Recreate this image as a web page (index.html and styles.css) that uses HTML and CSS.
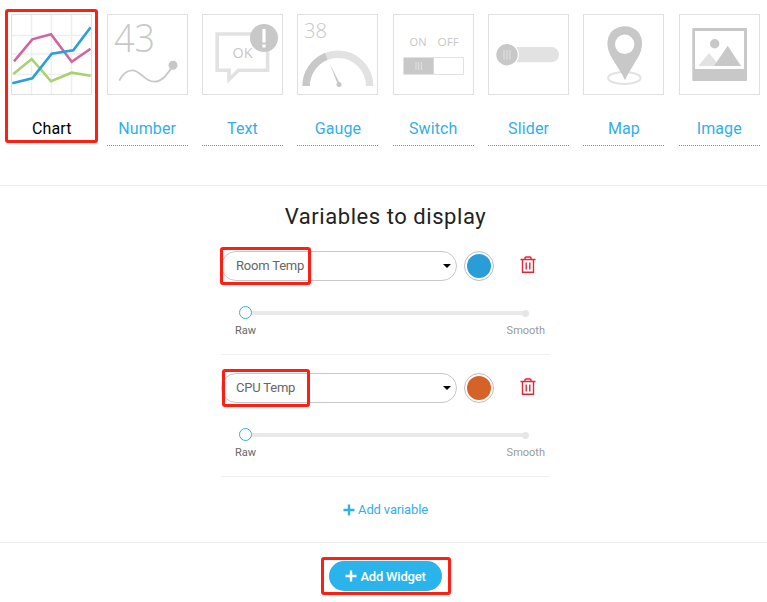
FILE: index.html
```html
<!DOCTYPE html>
<html lang="en">
<head>
<meta charset="utf-8">
<title>Add widget</title>
<link rel="stylesheet" href="styles.css">
</head>
<body>
<nav class="types">
  <a class="type selected"><svg class="tile" viewBox="0 0 79 79"><path class="grid" d="M19.5 0V79M39.5 0V79M59.5 0V79M0 20.5H79M0 39H79M0 59.5H79"/><g class="series"><path stroke="#d1669f" d="M2 46.3 20.3 24.3 39 19.3 59.7 46.7 78.5 33.7"/><path stroke="#a9d171" d="M1.3 59 19.7 44 39 66.3 59.7 57.7 78.7 60.7"/><path stroke="#2b9fdb" d="M.3 68.3 20.3 63.3 39.7 38.7 61.3 35.3 78.7 12.3"/></g></svg><span class="name">Chart</span><i class="mark mark-chart"></i></a>
  <a class="type"><svg class="tile" viewBox="0 0 79 79"><text class="light" x="6" y="37" font-size="39" textLength="41" lengthAdjust="spacingAndGlyphs">43</text><path fill="none" stroke="#c8c8c8" stroke-width="1.8" d="M11.3 65.7C15 58 20 55.3 24.3 55.3C33 55.3 36 66.7 46 66.7C54 66.7 59 60 64.7 51"/><circle class="dark" cx="65" cy="50.3" r="4.5"/></svg><span class="name">Number</span></a>
  <a class="type"><svg class="tile" viewBox="0 0 79 79"><path fill="none" stroke="#e2e2e2" stroke-width="3.6" d="M14.2 19H64.6V55.2H35.5L26 64.5V55.2H14.2Z"/><text class="plain" x="29.5" y="42.7" font-size="14" textLength="20" lengthAdjust="spacingAndGlyphs">OK</text><circle class="dark" cx="61" cy="23" r="14"/><path fill="#fff" d="M59.4 14h3.2v13.5h-3.2zM59.4 29.5h3.2v3h-3.2z"/></svg><span class="name">Text</span></a>
  <a class="type"><svg class="tile" viewBox="0 0 79 79"><text class="light" x="6" y="23.3" font-size="21" textLength="23" lengthAdjust="spacingAndGlyphs">38</text><path fill="none" stroke="#e2e2e2" stroke-width="7.4" d="M8.1 71A31.8 31.8 0 0 1 71.7 71"/><path fill="none" stroke="#c8c8c8" stroke-width="7.4" d="M8.1 71A31.8 31.8 0 0 1 28.3 41.4"/><path class="dark" d="M31.6 48.3 42 69 40 70Z"/><circle class="dark" cx="41" cy="69.4" r="2.5"/></svg><span class="name">Gauge</span></a>
  <a class="type"><svg class="tile" viewBox="0 0 79 79"><text class="plain" x="15.5" y="31" font-size="11.5" textLength="17" lengthAdjust="spacingAndGlyphs">ON</text><text class="plain" x="43.5" y="31" font-size="11.5" textLength="21.5" lengthAdjust="spacingAndGlyphs">OFF</text><path fill="#fff" stroke="#e2e2e2" d="M9.5 42.5H69.5V59.5H9.5Z"/><path class="dark" d="M10 43H39.7V59H10Z"/><path stroke="#e2e2e2" d="M22 47V55M24.7 47V55M27.4 47V55"/></svg><span class="name">Switch</span></a>
  <a class="type"><svg class="tile" viewBox="0 0 79 79"><rect x="16" y="32" width="54" height="15.3" rx="7.6" fill="#e2e2e2"/><circle class="dark" cx="18" cy="39.7" r="11.3" stroke="#fff" stroke-width="1.2"/><path stroke="#e2e2e2" d="M15 35V44.5M18 35V44.5M21 35V44.5"/></svg><span class="name">Slider</span></a>
  <a class="type"><svg class="tile" viewBox="0 0 79 79"><ellipse cx="40.3" cy="63" rx="16.2" ry="6" fill="none" stroke="#e2e2e2" stroke-width="2"/><path class="dark" fill-rule="evenodd" d="M41 65.3C37 56 29 46 25.6 38.5C22 30 23 21 28.3 16C35 9.5 46.5 9.5 53.2 16C58.5 21 59.5 30 56 38.5C52.5 46 45 56 41 65.3ZM50.4 29.3A9.7 9.7 0 1 0 31 29.3A9.7 9.7 0 1 0 50.4 29.3Z"/></svg><span class="name">Map</span></a>
  <a class="type"><svg class="tile" viewBox="0 0 79 79"><rect class="dark" x="12.3" y="13" width="54.7" height="53" rx="1"/><path fill="#fff" d="M15 16H64V54H15Z"/><circle class="dark" cx="34.7" cy="28.7" r="4.7"/><path fill="#e2e2e2" d="M18.3 51 29 38.3 40 51Z"/><path class="dark" d="M34 51 47.7 30.7 61 51Z"/></svg><span class="name">Image</span></a>
</nav>
<main class="variables">
  <h1>Variables to display</h1>
  <section class="variable">
    <div class="controls"><div class="select"><span>Room Temp</span><i class="caret"></i></div><i class="swatch blue"></i><svg class="trash" viewBox="0 0 16 18"><path d="M.5 3.5H15.5M5 3V2Q5 1 6 1H10Q11 1 11 2V3M2.5 4V16.2H13.5V4M6.2 6.5V13.5M9.8 6.5V13.5"/></svg></div>
    <div class="slider"><i class="knob"></i><i class="track"></i><i class="stop"></i></div>
    <div class="ends"><span>Raw</span><span class="smooth">Smooth</span></div>
    <i class="mark mark-room"></i>
  </section>
  <section class="variable">
    <div class="controls"><div class="select"><span>CPU Temp</span><i class="caret"></i></div><i class="swatch orange"></i><svg class="trash" viewBox="0 0 16 18"><path d="M.5 3.5H15.5M5 3V2Q5 1 6 1H10Q11 1 11 2V3M2.5 4V16.2H13.5V4M6.2 6.5V13.5M9.8 6.5V13.5"/></svg></div>
    <div class="slider"><i class="knob"></i><i class="track"></i><i class="stop"></i></div>
    <div class="ends"><span>Raw</span><span class="smooth">Smooth</span></div>
    <i class="mark mark-cpu"></i>
  </section>
  <a class="add"><svg class="plus" viewBox="0 0 12 12"><path d="M6 .5V11.5M.5 6H11.5"/></svg><span>Add variable</span></a>
</main>
<footer><button class="submit"><svg class="plus" viewBox="0 0 12 12"><path d="M6 .5V11.5M.5 6H11.5"/></svg><span>Add Widget</span><i class="mark mark-submit"></i></button></footer>
</body>
</html>
```
FILE: styles.css
```css
* { box-sizing: border-box; }
body { margin: 0; background: #fff; color: #222; font-family: Roboto, sans-serif; height: 602px; overflow: hidden; }
.types { display: flex; justify-content: space-between; width: 767px; height: 186px; padding: 14px 7.2px 0 11.35px; border-bottom: 1px solid #eee; }
.type { position: relative; display: flex; flex-direction: column; width: 81px; height: 132px; border-bottom: 1px dotted #29abe2; color: #35aee8; }
.type.selected { color: #000; border-color: transparent; }
.tile { display: block; flex: none; width: 81px; height: 81px; border: 1px solid #e0e0e0; }
.grid { stroke: #eee; stroke-width: 1.5; fill: none; }
.series { fill: none; stroke-width: 2.6; }
.dark { fill: #c8c8c8; }
.light { font-family: "Open Sans", sans-serif; font-weight: 300; fill: #c8c8c8; }
.plain { font-family: "Open Sans", sans-serif; fill: #c8c8c8; }
.name { margin-top: 23px; font-size: 16px; line-height: 22px; letter-spacing: .12px; text-align: center; }
.mark { position: absolute; border: 3px solid #ff1e12; border-radius: 3px; pointer-events: none; }
.mark-chart { left: -6px; top: -5px; width: 93px; height: 134px; }
.variables { width: 329px; margin-left: 221px; height: 356px; }
h1 { margin: 0; height: 47px; padding-top: 16px; font-size: 22px; line-height: 30px; font-weight: 400; letter-spacing: .55px; text-align: center; white-space: nowrap; }
.variable { position: relative; height: 122px; padding-top: 18px; border-bottom: 1px solid #f0f0f0; }
.controls { display: flex; align-items: center; height: 30px; }
.select { display: flex; align-items: center; justify-content: space-between; width: 236px; height: 30px; padding: 0 5px 0 14px; border: 1px solid #c8c8c8; border-radius: 15px; font-size: 13px; letter-spacing: -.2px; color: #666; }
.select span { padding-bottom: 2px; }
.caret { border: 4px solid transparent; border-top-color: #000; border-bottom: 0; }
.swatch { width: 30px; height: 30px; margin-left: 7px; border: 1px solid #b5bfc6; border-radius: 50%; padding: 2px; background-clip: content-box; }
.blue { background-color: #289dd8; }
.orange { background-color: #d56327; border-color: #c5bbb6; }
.trash { width: 16px; height: 18px; margin: -3px 0 0 26px; fill: none; stroke: #e32636; stroke-width: 1.4; }
.slider { display: flex; align-items: center; height: 14px; margin: 25px 21px 0 18px; }
.knob { flex: none; width: 13px; height: 13px; margin-top: -1px; border: 1.5px solid #29b5eb; border-radius: 50%; }
.track { flex: 1; height: 4px; background: #e9e9e9; }
.stop { flex: none; width: 7px; height: 7px; margin-left: -1px; border-radius: 50%; background: #e6e6e6; }
.ends { display: flex; justify-content: space-between; padding: 4px 5px 0 14px; font-size: 11px; line-height: 14px; color: #666; }
.smooth { color: #999; }
.mark-room { left: -1px; top: 14px; width: 91px; height: 38px; }
.mark-cpu { left: 1px; top: 14px; width: 88px; height: 38px; }
.add { display: flex; align-items: center; justify-content: center; gap: 3px; height: 65px; color: #35aee8; font-size: 13px; letter-spacing: -.15px; }
.plus { width: 12px; height: 12px; fill: none; stroke: currentColor; stroke-width: 2.4; }
footer { height: 60px; padding-top: 18px; border-top: 1px solid #eee; }
.submit { position: relative; display: flex; align-items: center; justify-content: center; gap: 3px; width: 113px; height: 30px; margin-left: 329px; padding: 0; border: 0; border-radius: 15px; background: #2ab4eb; color: #fff; font: 500 13px Roboto, sans-serif; letter-spacing: -.2px; }
.mark-submit { left: -8px; top: -4px; width: 130px; height: 38px; }
```
